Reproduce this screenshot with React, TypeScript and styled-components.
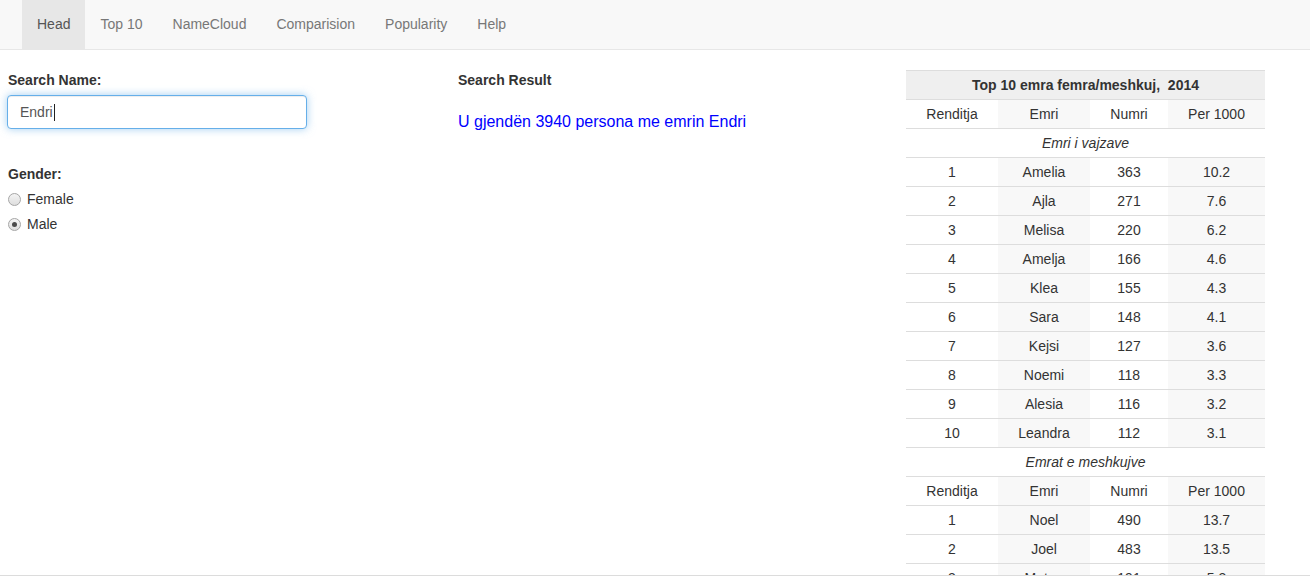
import React from "react";
import styled, { createGlobalStyle } from "styled-components";

const GlobalStyle = createGlobalStyle`
  html, body {
    margin: 0;
    padding: 0;
    overflow: hidden;
    background: #fff;
  }
  body {
    font-family: "Liberation Sans", Arial, sans-serif;
    font-size: 14px;
    line-height: 20px;
    color: #333;
  }
  * { box-sizing: border-box; }
`;

const Navbar = styled.nav`
  height: 50px;
  background: #f8f8f8;
  border-bottom: 1px solid #e7e7e7;
  display: flex;
  padding-left: 22px;
`;

const NavItem = styled.a<{ $active?: boolean }>`
  display: block;
  height: 49px;
  line-height: 49px;
  padding: 0 15px;
  font-size: 14px;
  color: ${(p) => (p.$active ? "#555" : "#777")};
  background: ${(p) => (p.$active ? "#e7e7e7" : "transparent")};
  text-decoration: none;
  cursor: pointer;
`;

const Main = styled.main`
  display: grid;
  grid-template-columns: 450px 448px 359px;
  padding: 20px 8px 0;
  align-items: start;
`;

const Column = styled.section`
  display: flex;
  flex-direction: column;
`;

const Label = styled.div`
  font-weight: bold;
  font-size: 14px;
  line-height: 20px;
  margin-bottom: 5px;
`;

const FormGroup = styled.div<{ $gap?: number }>`
  display: flex;
  flex-direction: column;
  margin-bottom: ${(p) => p.$gap ?? 0}px;
`;

const TextField = styled.div`
  width: 300px;
  height: 34px;
  margin-left: -1px;
  padding: 0 12px;
  display: flex;
  align-items: center;
  font-size: 14px;
  color: #555;
  background: #fff;
  border: 1px solid #66afe9;
  border-radius: 4px;
  box-shadow: inset 0 1px 1px rgba(0, 0, 0, 0.075), 0 0 8px rgba(102, 175, 233, 0.6);
`;

const Caret = styled.span`
  display: inline-block;
  width: 1px;
  height: 17px;
  background: #222;
  margin-left: 1px;
`;

const RadioRow = styled.label`
  display: flex;
  align-items: center;
  height: 20px;
  margin-bottom: 5px;
  font-size: 14px;
  color: #333;
  cursor: pointer;
`;

const RadioDot = styled.span<{ $checked?: boolean }>`
  position: relative;
  width: 13px;
  height: 13px;
  border-radius: 50%;
  border: 1px solid #a6a6a6;
  background: linear-gradient(#f4f4f4, #dedede);
  margin-right: 6px;
  flex: none;
  &::after {
    content: "";
    display: ${(p) => (p.$checked ? "block" : "none")};
    position: absolute;
    left: 3px;
    top: 3px;
    width: 5px;
    height: 5px;
    border-radius: 50%;
    background: #4a4a4a;
  }
`;

const ResultText = styled.div`
  margin-top: 17px;
  font-size: 16px;
  line-height: 20px;
  color: #0000ff;
`;

const Table = styled.table`
  width: 359px;
  border-collapse: collapse;
  border-top: 1px solid #ddd;
  font-size: 14px;
  color: #333;
  table-layout: fixed;
`;

const Caption = styled.th`
  height: 29px;
  padding: 0;
  background: #efefef;
  font-weight: bold;
  text-align: center;
  border-bottom: 1px solid #ddd;
  white-space: pre;
`;

const Row = styled.tr`
  border-bottom: 1px solid #ddd;
`;

const Cell = styled.td<{ $shade?: boolean }>`
  height: 29px;
  padding: 0 4px;
  text-align: center;
  line-height: 28px;
  background: ${(p) => (p.$shade ? "#f8f8f8" : "#fff")};
`;

const HeadCell = styled(Cell).attrs({ as: "th" })`
  font-weight: normal;
`;

const SubTitle = styled.td`
  height: 29px;
  padding: 0;
  text-align: center;
  font-style: italic;
  background: #fff;
`;

const BottomBar = styled.div`
  position: fixed;
  left: 0;
  right: 0;
  bottom: 0;
  height: 6px;
  background: #fff;
  border-top: 1px solid #dcdcdc;
`;

const girls = [
  ["1", "Amelia", "363", "10.2"],
  ["2", "Ajla", "271", "7.6"],
  ["3", "Melisa", "220", "6.2"],
  ["4", "Amelja", "166", "4.6"],
  ["5", "Klea", "155", "4.3"],
  ["6", "Sara", "148", "4.1"],
  ["7", "Kejsi", "127", "3.6"],
  ["8", "Noemi", "118", "3.3"],
  ["9", "Alesia", "116", "3.2"],
  ["10", "Leandra", "112", "3.1"],
];

const boys = [
  ["1", "Noel", "490", "13.7"],
  ["2", "Joel", "483", "13.5"],
  ["3", "Mateo", "191", "5.3"],
  ["4", "Ergi", "178", "5.0"],
];

const HeaderRow = () => (
  <Row>
    <HeadCell>Renditja</HeadCell>
    <HeadCell $shade>Emri</HeadCell>
    <HeadCell>Numri</HeadCell>
    <HeadCell $shade>Per 1000</HeadCell>
  </Row>
);

const DataRows = ({ rows }: { rows: string[][] }) => (
  <>
    {rows.map((r) => (
      <Row key={r[0] + r[1]}>
        <Cell>{r[0]}</Cell>
        <Cell $shade>{r[1]}</Cell>
        <Cell>{r[2]}</Cell>
        <Cell $shade>{r[3]}</Cell>
      </Row>
    ))}
  </>
);

export default function App() {
  const tabs = ["Head", "Top 10", "NameCloud", "Comparision", "Popularity", "Help"];
  return (
    <>
      <GlobalStyle />
      <Navbar>
        {tabs.map((t, i) => (
          <NavItem key={t} $active={i === 0}>
            {t}
          </NavItem>
        ))}
      </Navbar>
      <Main>
        <Column>
          <FormGroup $gap={35}>
            <Label>Search Name:</Label>
            <TextField role="textbox">
              Endri
              <Caret />
            </TextField>
          </FormGroup>
          <FormGroup>
            <Label>Gender:</Label>
            <RadioRow>
              <RadioDot />
              Female
            </RadioRow>
            <RadioRow>
              <RadioDot $checked />
              Male
            </RadioRow>
          </FormGroup>
        </Column>
        <Column>
          <Label>Search Result</Label>
          <ResultText>U gjendën 3940 persona me emrin Endri</ResultText>
        </Column>
        <Column>
          <Table>
            <colgroup>
              <col style={{ width: 92 }} />
              <col style={{ width: 92 }} />
              <col style={{ width: 78 }} />
              <col style={{ width: 97 }} />
            </colgroup>
            <thead>
              <tr>
                <Caption colSpan={4}>Top 10 emra femra/meshkuj,  2014</Caption>
              </tr>
            </thead>
            <tbody>
              <HeaderRow />
              <Row>
                <SubTitle colSpan={4}>Emri i vajzave</SubTitle>
              </Row>
              <DataRows rows={girls} />
              <Row>
                <SubTitle colSpan={4}>Emrat e meshkujve</SubTitle>
              </Row>
              <HeaderRow />
              <DataRows rows={boys} />
            </tbody>
          </Table>
        </Column>
      </Main>
      <BottomBar />
    </>
  );
}
